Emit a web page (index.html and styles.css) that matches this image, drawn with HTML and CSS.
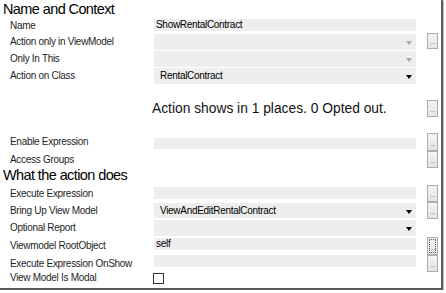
FILE: index.html
```html
<!DOCTYPE html>
<html lang="en">
<head>
    <meta charset="UTF-8">
    <title>Action Properties</title>
    <link rel="stylesheet" href="styles.css">
</head>
<body>
    <div class="window">
        <h2 class="section">Name and Context</h2>

        <div class="row row-short">
            <span class="label">Name</span>
            <div class="field text">ShowRentalContract</div>
        </div>
        <div class="row row-gap">
            <span class="label">Action only in ViewModel</span>
            <div class="field combo disabled"></div>
            <button class="more top">...</button>
        </div>
        <div class="row">
            <span class="label">Only In This</span>
            <div class="field combo disabled"></div>
        </div>
        <div class="row">
            <span class="label">Action on Class</span>
            <div class="field combo">RentalContract</div>
        </div>

        <div class="row row-info">
            <span class="label"></span>
            <div class="info">Action shows in 1 places. 0 Opted out.</div>
            <button class="more">...</button>
        </div>

        <div class="row row-tall row-info-gap">
            <span class="label label-low">Enable Expression</span>
            <div class="field text text-low"></div>
            <button class="more">...</button>
        </div>
        <div class="row row-tight">
            <span class="label">Access Groups</span>
            <span></span>
            <button class="more">...</button>
        </div>

        <h2 class="section section-second">What the action does</h2>

        <div class="row">
            <span class="label">Execute Expression</span>
            <div class="field text text-mid"></div>
            <button class="more">...</button>
        </div>
        <div class="row">
            <span class="label">Bring Up View Model</span>
            <div class="field combo combo-slim">ViewAndEditRentalContract</div>
            <button class="more">...</button>
        </div>
        <div class="row">
            <span class="label">Optional Report</span>
            <div class="field combo"></div>
        </div>
        <div class="row row-root">
            <span class="label">Viewmodel RootObject</span>
            <div class="field text text-mid">self</div>
            <button class="more focused">...</button>
        </div>
        <div class="row">
            <span class="label">Execute Expression OnShow</span>
            <div class="field text text-top"></div>
            <button class="more">...</button>
        </div>
        <div class="row row-check">
            <span class="label">View Model Is Modal</span>
            <span class="checkbox"></span>
        </div>
    </div>
</body>
</html>
```

FILE: styles.css
```css
html, body {
    margin: 0;
    background: #ffffff;
}

body {
    font-family: "Liberation Sans", Arial, sans-serif;
    color: #1e1e1e;
}

.window {
    width: 441px;
    height: 288px;
    background: #ffffff;
    border-right: 2px solid #5a5a5a;
    border-bottom: 2px solid #5a5a5a;
    box-shadow: 1px 1px 0 #bdbdbd;
    overflow: hidden;
}

.section {
    margin: 0;
    height: 19px;
    padding-left: 3px;
    font-size: 14.5px;
    font-weight: normal;
    letter-spacing: -0.6px;
    line-height: 19px;
    color: #000;
}

.row {
    display: grid;
    grid-template-columns: 154px 262px 11px 11px;
    height: 17px;
    align-items: start;
}

.row-short { height: 13px; }
.row-gap { margin-top: 1px; }
.row-tall { height: 18px; }
.row-tight { height: 15px; }
.row-root { height: 19px; }
.row-check { height: 11px; align-items: center; }

.row-info {
    margin-top: 16px;
    align-items: center;
}

.row-info-gap { margin-top: 16px; }

.label {
    padding-left: 10px;
    font-size: 10px;
    letter-spacing: -0.3px;
    line-height: 12px;
    white-space: nowrap;
    align-self: center;
}

.field {
    background: #eeeeee;
    font-size: 10px;
    letter-spacing: -0.3px;
    color: #000;
    white-space: nowrap;
    box-sizing: border-box;
}

.text {
    height: 12px;
    line-height: 12px;
    padding-left: 2px;
}

.text-low { height: 11px; margin-top: 5px; }
.text-mid { margin-top: 2px; }
.text-top { margin-top: 0; }

.combo {
    position: relative;
    height: 16px;
    margin-top: 1px;
    line-height: 16px;
    padding-left: 6px;
}

.combo-slim { height: 15px; line-height: 15px; }

.combo::after {
    content: "";
    position: absolute;
    right: 4px;
    top: 50%;
    margin-top: -1px;
    border-left: 3px solid transparent;
    border-right: 3px solid transparent;
    border-top: 4px solid #000;
}

.combo.disabled::after {
    border-top-color: #a8a8a8;
}

.info {
    margin-left: -2px;
    font-size: 13.8px;
    color: #111;
    white-space: nowrap;
    line-height: 17px;
}

.more {
    grid-column: 4;
    width: 11px;
    height: 17px;
    margin: 0;
    padding: 0 0 3px;
    box-sizing: border-box;
    border: 1px solid #adadad;
    background: linear-gradient(#f4f4f4, #e4e4e4);
    font-family: "Liberation Sans", Arial, sans-serif;
    font-size: 7px;
    letter-spacing: -0.5px;
    color: #8d7f9e;
    display: flex;
    align-items: flex-end;
    justify-content: center;
    overflow: hidden;
}

.more.top { height: 16px; }
.row-tall .more { height: 18px; }
.row-root .more { height: 18px; margin-top: 1px; }

.more.focused {
    outline: 1px dotted #555;
    outline-offset: -3px;
}

.checkbox {
    width: 11px;
    height: 11px;
    margin-left: -1px;
    box-sizing: border-box;
    border: 1px solid #333;
    background: #fff;
}
```
